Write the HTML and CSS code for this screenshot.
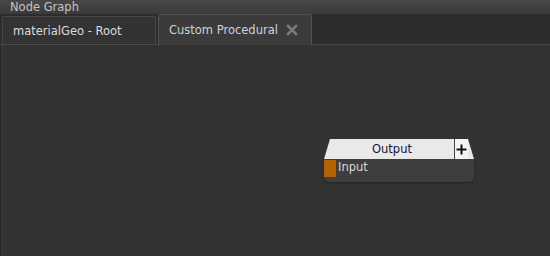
FILE: index.html
```html
<!DOCTYPE html>
<html lang="en">
<head>
    <meta charset="UTF-8">
    <title>Node Graph</title>
    <link rel="stylesheet" href="styles.css">
</head>
<body>
    <div class="panel">
        <div class="titleBar">Node Graph</div>
        <div class="tabBar">
            <div class="tab">materialGeo - Root</div>
            <div class="tab active">
                Custom Procedural
                <svg class="closeIcon" width="12" height="12" viewBox="0 0 12 12">
                    <path d="M2 2 L10 10 M10 2 L2 10" stroke="#7a7a7a" stroke-width="2.6" stroke-linecap="square"/>
                </svg>
            </div>
        </div>
        <div class="canvas">
            <div class="node">
                <div class="nodeHeader">
                    <span class="nodeName">Output</span>
                    <span class="addPort">
                        <svg width="11" height="11" viewBox="0 0 11 11">
                            <path d="M5.5 0.5 V10.5 M0.5 5.5 H10.5" stroke="#111" stroke-width="2"/>
                        </svg>
                    </span>
                </div>
                <div class="nodeBody">
                    <span class="port"></span>
                    <span class="portName">Input</span>
                </div>
            </div>
        </div>
    </div>
</body>
</html>
```

FILE: styles.css
```css
body {
    margin: 0;
    padding: 0;
    background-color: #2c2c2c;
    font-family: "DejaVu Sans", Verdana, sans-serif;
    font-size: 11px;
    color: #d2d2d2;
}
.panel {
    width: 550px;
    height: 256px;
    display: flex;
    flex-direction: column;
    overflow: hidden;
}
.titleBar {
    height: 14px;
    line-height: 14px;
    padding-left: 10px;
    background: linear-gradient(#474747, #3a3a3a);
    color: #c4c4c4;
    font-size: 11.5px;
}
.tabBar {
    height: 31px;
    box-sizing: border-box;
    display: flex;
    align-items: flex-end;
    gap: 2px;
    padding-left: 2px;
    background-color: #2d2d2d;
    border-bottom: 1px solid #4a4a4a;
}
.tab {
    box-sizing: border-box;
    width: 154px;
    height: 28px;
    padding-left: 10px;
    display: flex;
    align-items: center;
    background-color: #333333;
    border: 1px solid #464646;
    border-bottom: none;
    border-radius: 2px 2px 0 0;
    font-size: 11.5px;
    color: #dcdcdc;
}
.tab.active {
    height: 31px;
    margin-bottom: -1px;
    background-color: #3b3b3b;
    border-color: #525252;
    color: #c9d4dc;
}
.closeIcon {
    margin-left: 8px;
}
.canvas {
    flex: 1;
    position: relative;
    background-color: #323232;
    border-left: 1px solid #3e3e3e;
    margin-left: 2px;
}
.node {
    position: absolute;
    left: 321px;
    top: 94px;
    width: 150px;
}
.nodeHeader {
    height: 20px;
    display: flex;
    align-items: center;
    background-color: #e9e9e9;
    clip-path: polygon(6px 0, 144px 0, 150px 100%, 0 100%);
}
.nodeName {
    flex: 1;
    text-align: center;
    padding-left: 6px;
    color: #151535;
    font-size: 11.5px;
}
.addPort {
    width: 14px;
    height: 20px;
    margin-right: 6px;
    box-sizing: border-box;
    border-left: 1px solid #444;
    background-color: #f4f4f4;
    display: flex;
    align-items: center;
    justify-content: center;
}
.nodeBody {
    height: 23px;
    box-sizing: border-box;
    padding-top: 1px;
    display: flex;
    align-items: flex-start;
    background-color: #3e3e3e;
    border-radius: 0 0 5px 5px;
    box-shadow: 0 1px 2px rgba(0, 0, 0, 0.35);
}
.port {
    width: 12px;
    height: 17px;
    background-color: #b56300;
    margin-right: 2px;
}
.portName {
    line-height: 15px;
    color: #d6d6d6;
    font-size: 11.5px;
}
```
